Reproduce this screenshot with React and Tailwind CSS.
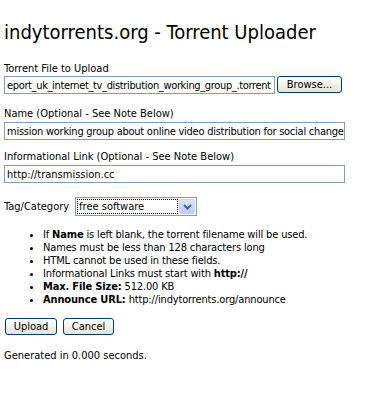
import React from "react";

const font = { fontFamily: "'DejaVu Sans Condensed', 'DejaVu Sans', sans-serif" };

function TextBox({ value, width, tracking = "" }) {
  return (
    <div
      className={`h-[18px] border border-[#7f9db9] bg-white flex items-center overflow-hidden whitespace-nowrap px-[2px] text-[11px] text-black ${width} ${tracking}`}
    >
      <span>{value}</span>
    </div>
  );
}

function XpButton({ children, width }) {
  return (
    <div
      className={`h-[17px] rounded-[3px] border border-[#003c74] bg-gradient-to-b from-white to-[#e6e3d6] flex items-center justify-center text-[11px] text-black ${width}`}
    >
      {children}
    </div>
  );
}

export default function App() {
  const notes = [
    <>If <b>Name</b> is left blank, the torrent filename will be used.</>,
    <>Names must be less than 128 characters long</>,
    <>HTML cannot be used in these fields.</>,
    <>Informational Links must start with <b>http://</b></>,
    <><b>Max. File Size:</b> 512.00 KB</>,
    <><b>Announce URL:</b> http://indytorrents.org/announce</>,
  ];

  return (
    <div className="w-[387px] h-[413px] bg-white text-black px-[4px] text-[11px] leading-[13px]" style={font}>
      <h1 className="pt-[19px] text-[20px] leading-[26px] font-normal">indytorrents.org - Torrent Uploader</h1>

      <div className="mt-[17px]">
        <div>Torrent File to Upload</div>
        <div className="flex gap-[2px] mt-[1px]">
          <TextBox width="w-[271px]" tracking="tracking-[-0.35px]" value="eport_uk_internet_tv_distribution_working_group_.torrent" />
          <XpButton width="w-[65px]">Browse...</XpButton>
        </div>
      </div>

      <div className="mt-[13px]">
        <div>Name (Optional - See Note Below)</div>
        <div className="mt-[2px]">
          <TextBox width="w-[341px]" tracking="tracking-[-0.25px]" value="mission working group about online video distribution for social change" />
        </div>
      </div>

      <div className="mt-[10px]">
        <div>Informational Link (Optional - See Note Below)</div>
        <div className="mt-[2px]">
          <TextBox width="w-[341px]" value="http://transmission.cc" />
        </div>
      </div>

      <div className="mt-[14px] flex items-center gap-[6px]">
        <span>Tag/Category</span>
        <div className="h-[19px] w-[122px] border border-[#7f9db9] bg-white flex items-center p-[1px]">
          <div className="flex-1 h-full border border-dotted border-black flex items-center px-[1px]">free software</div>
          <div className="w-[16px] h-full ml-[1px] rounded-[2px] bg-gradient-to-b from-[#dbe5fb] to-[#b9cdf5] border border-[#c3d3fd] flex items-center justify-center">
            <svg width="9" height="6" viewBox="0 0 9 6">
              <path d="M1 1 L4.5 4.5 L8 1" fill="none" stroke="#4d6185" strokeWidth="2" />
            </svg>
          </div>
        </div>
      </div>

      <ul className="mt-[12px] pl-[39px] list-disc tracking-[-0.15px]">
        {notes.map((n, i) => (
          <li key={i} className="leading-[13px]">{n}</li>
        ))}
      </ul>

      <div className="mt-[12px] flex gap-[6px] ml-[1px]">
        <XpButton width="w-[52px]">Upload</XpButton>
        <XpButton width="w-[51px]">Cancel</XpButton>
      </div>

      <div className="mt-[14px]">Generated in 0.000 seconds.</div>
    </div>
  );
}
